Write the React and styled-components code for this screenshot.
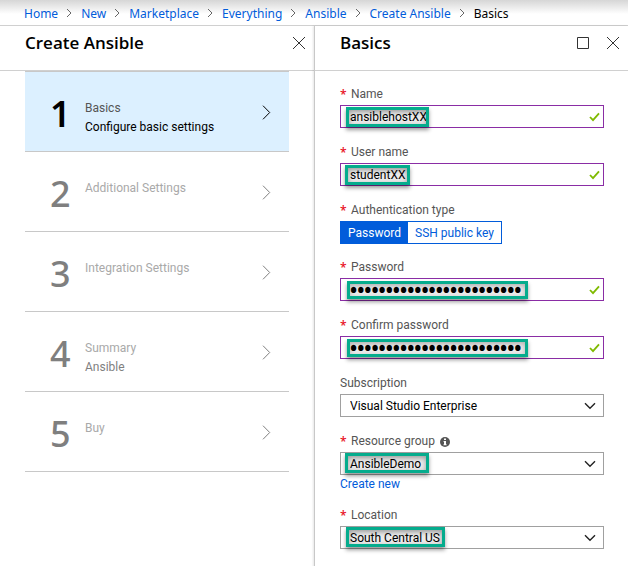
import React from "react";
import styled, { createGlobalStyle, css } from "styled-components";

const Global = createGlobalStyle`
  * { box-sizing: border-box; }
  body { margin: 0; background: #fff; color: #000; }
  body, button, input, select { font-family: Roboto, "Open Sans", sans-serif; font-size: 12px; }
  button { cursor: pointer; }
`;

const Page = styled.div`
  min-height: 100vh;
  display: flex;
  flex-direction: column;
`;

const Breadcrumb = styled.nav`
  height: 26px;
  padding: 1px 24px 0;
  display: flex;
  align-items: center;
  gap: 8px;
  font-family: "Noto Sans", sans-serif;
  font-size: 12px;
  white-space: nowrap;
  border-bottom: 1px solid #d0d0d0;
  background: linear-gradient(#d6d6d6, #fff 14px);
`;

const Crumb = styled.a`
  color: #015cda;
  text-decoration: none;
`;

const CurrentCrumb = styled.span`
  color: #000;
`;

const Blades = styled.main`
  flex: 1;
  display: grid;
  grid-template-columns: 1fr 1fr;
`;

const Blade = styled.section`
  min-width: 0;
  border-left: ${(p) => (p.$divided ? "1px solid #c8c8c8" : "none")};
  box-shadow: ${(p) => (p.$divided ? "-1px 0 2px rgba(0, 0, 0, 0.1)" : "none")};
`;

const BladeHeader = styled.header`
  height: 45px;
  padding: 0 7px 10px 25px;
  display: flex;
  align-items: center;
  gap: 14px;
  border-bottom: 1px solid #d0d0d0;
`;

const Title = styled.h1`
  flex: 1;
  margin: 0;
  font-family: "Open Sans", "Noto Sans", sans-serif;
  font-size: 17px;
  line-height: 24px;
  font-weight: 600;
`;

const IconButton = styled.button`
  display: flex;
  padding: 1px;
  border: 0;
  background: none;
  color: #333;
`;

const Steps = styled.ol`
  list-style: none;
  margin: 0 25px;
  padding: 0;
  border-top: 1px solid #c8c8c8;
`;

const StepItem = styled.li`
  border-bottom: 1px solid #c8c8c8;
`;

const StepButton = styled.button`
  width: 100%;
  height: 79px;
  padding: 2px 18px 0 25px;
  display: flex;
  align-items: center;
  border: 0;
  text-align: left;
  background: ${(p) => (p.$active ? "#dcf0ff" : "#fff")};
  color: ${(p) => (p.$active ? "#000" : "#7f7f7f")};
`;

const StepNumber = styled.span`
  width: 35px;
  padding-top: 2px;
  font-family: "Noto Sans", "Open Sans", sans-serif;
  font-size: 36px;
  line-height: 44px;
  font-weight: ${(p) => (p.$active ? 600 : 500)};
`;

const StepText = styled.span`
  flex: 1;
  height: 38px;
  display: flex;
  flex-direction: column;
  line-height: 19px;
  margin-top: 11px;
`;

const StepName = styled.span`
  color: ${(p) => (p.$active ? "#555" : "#a9a9a9")};
`;

const Form = styled.form`
  padding: 16px 24px 16px 25px;
`;

const Field = styled.div`
  margin-bottom: ${(p) => (p.$tight ? 16 : 17)}px;
`;

const labelStyle = css`
  display: flex;
  align-items: center;
  height: 18px;
  padding-bottom: 4px;
  color: #555;
`;

const Label = styled.label`
  ${labelStyle}
`;

const GroupLabel = styled.span`
  ${labelStyle}
`;

const Required = styled.span`
  width: 11px;
  color: #e81123;
  font-family: "Open Sans", sans-serif;
  font-size: 12px;
  font-weight: 600;
`;

const Control = styled.div`
  position: relative;
`;

const TextInput = styled.input`
  display: block;
  width: 100%;
  height: 23px;
  padding: 0 28px 0 9px;
  border: 1px solid #8a2da5;
  border-radius: 0;
  background: #fff;
  color: #000;
  outline: none;
`;

const PasswordInput = styled(TextInput)`
  font-family: "Noto Sans", sans-serif;
  font-size: 19px;
  font-weight: 700;
`;

const Select = styled.select`
  appearance: none;
  display: block;
  width: 100%;
  height: 23px;
  padding: 0 28px 0 9px;
  border: 1px solid #a0a0a0;
  border-radius: 0;
  background: #fff;
  color: #000;
  outline: none;
`;

const Adornment = styled.span`
  position: absolute;
  right: ${(p) => p.$right}px;
  top: 0;
  height: 100%;
  display: flex;
  align-items: center;
  pointer-events: none;
`;

const Highlight = styled.span`
  position: absolute;
  top: ${(p) => p.$top}px;
  left: ${(p) => p.$left}px;
  width: ${(p) => p.$width}px;
  height: ${(p) => (p.$filled ? 18 : 20)}px;
  border: 3px solid #05ac8d;
  background: rgba(0, 0, 0, 0.08);
  box-shadow: 0 3px 4px rgba(0, 0, 0, 0.4), inset 0 2px 5px rgba(0, 0, 0, ${(p) => (p.$filled ? 0.25 : 0.35)});
  pointer-events: none;
`;

const Segmented = styled.div`
  display: inline-flex;
  height: 23px;
  vertical-align: top;
  border: 1px solid #015cda;
`;

const Segment = styled.button`
  padding: 0 7px;
  border: 0;
  white-space: nowrap;
  background: ${(p) => (p.$selected ? "#015cda" : "#fff")};
  color: ${(p) => (p.$selected ? "#fff" : "#015cda")};
`;

const CreateLink = styled.a`
  display: block;
  height: 16px;
  line-height: 18px;
  color: #015cda;
  text-decoration: none;
`;

const InfoIcon = styled.svg`
  margin: 2px 0 0 5px;
`;

const CloseIcon = () => (
  <svg width="14" height="14" viewBox="0 0 14 14" fill="none" stroke="currentColor" aria-hidden="true">
    <path d="M1 1l12 12M13 1L1 13" />
  </svg>
);

const MaximizeIcon = () => (
  <svg width="14" height="14" viewBox="0 0 14 14" fill="none" stroke="currentColor" aria-hidden="true">
    <path d="M1.5 1.5h11v11h-11z" />
  </svg>
);

const StepChevron = () => (
  <svg width="9" height="15" viewBox="0 0 9 15" fill="none" stroke="currentColor" aria-hidden="true">
    <path d="M1 .7l6.7 6.8L1 14.3" />
  </svg>
);

const CrumbChevron = () => (
  <svg width="7" height="10" viewBox="0 0 7 10" fill="none" stroke="#666" aria-hidden="true">
    <path d="M1 1l4 4-4 4" />
  </svg>
);

const DownChevron = () => (
  <svg width="12" height="8" viewBox="0 0 12 8" fill="none" stroke="#222" strokeWidth="1.4" aria-hidden="true">
    <path d="M1 1.2l5 5 5-5" />
  </svg>
);

const Check = () => (
  <svg width="11" height="10" viewBox="0 0 11 10" fill="none" stroke="#7fba00" strokeWidth="1.8" aria-hidden="true">
    <path d="M1 5l3 3.2L10 1.3" />
  </svg>
);

const crumbs = ["Home", "New", "Marketplace", "Everything", "Ansible", "Create Ansible"];

const steps = [
  { name: "Basics", detail: "Configure basic settings" },
  { name: "Additional Settings" },
  { name: "Integration Settings" },
  { name: "Summary", detail: "Ansible" },
  { name: "Buy" },
];

function TextField({ id, label, secret, value, mark }) {
  return (
    <Field>
      <Label htmlFor={id}>
        <Required>*</Required>
        {label}
      </Label>
      <Control>
        {secret ? (
          <PasswordInput id={id} type="password" defaultValue={value} />
        ) : (
          <TextInput id={id} type="text" defaultValue={value} />
        )}
        <Highlight $top={mark.top} $left={mark.left} $width={mark.width} $filled={secret} />
        <Adornment $right={4}>
          <Check />
        </Adornment>
      </Control>
    </Field>
  );
}

function SelectField({ id, label, value, required, info, mark, children }) {
  return (
    <Field>
      <Label htmlFor={id}>
        {required && <Required>*</Required>}
        {label}
        {info && (
          <InfoIcon width="10" height="10" viewBox="0 0 10 10" aria-hidden="true">
            <circle cx="5" cy="5" r="5" fill="#555" />
            <path d="M4 1.5h2v1.4H4zM3.6 4H6v3.2h.6v1H3.5v-1H4V5h-.4z" fill="#fff" />
          </InfoIcon>
        )}
      </Label>
      <Control>
        <Select id={id} defaultValue={value}>
          <option>{value}</option>
        </Select>
        {mark && <Highlight $top={mark.top} $left={mark.left} $width={mark.width} />}
        <Adornment $right={8}>
          <DownChevron />
        </Adornment>
      </Control>
      {children}
    </Field>
  );
}

export default function App() {
  return (
    <Page>
      <Global />
      <Breadcrumb aria-label="Breadcrumb">
        {crumbs.map((name) => (
          <React.Fragment key={name}>
            <Crumb href="#">{name}</Crumb>
            <CrumbChevron />
          </React.Fragment>
        ))}
        <CurrentCrumb aria-current="page">Basics</CurrentCrumb>
      </Breadcrumb>
      <Blades>
        <Blade>
          <BladeHeader>
            <Title>Create Ansible</Title>
            <IconButton aria-label="Close Create Ansible">
              <CloseIcon />
            </IconButton>
          </BladeHeader>
          <Steps>
            {steps.map((step, i) => (
              <StepItem key={step.name}>
                <StepButton $active={i === 0}>
                  <StepNumber $active={i === 0}>{i + 1}</StepNumber>
                  <StepText>
                    <StepName $active={i === 0}>{step.name}</StepName>
                    {step.detail && <span>{step.detail}</span>}
                  </StepText>
                  <StepChevron />
                </StepButton>
              </StepItem>
            ))}
          </Steps>
        </Blade>
        <Blade $divided>
          <BladeHeader>
            <Title as="h2">Basics</Title>
            <IconButton aria-label="Maximize Basics">
              <MaximizeIcon />
            </IconButton>
            <IconButton aria-label="Close Basics">
              <CloseIcon />
            </IconButton>
          </BladeHeader>
          <Form onSubmit={(e) => e.preventDefault()}>
            <TextField id="name" label="Name" value="ansiblehostXX" mark={{ top: 2, left: 6, width: 83 }} />
            <TextField id="user" label="User name" value="studentXX" mark={{ top: 2, left: 5, width: 65 }} />
            <Field $tight role="group" aria-labelledby="auth">
              <GroupLabel id="auth">
                <Required>*</Required>
                Authentication type
              </GroupLabel>
              <Segmented>
                <Segment type="button" aria-pressed="true" $selected>Password</Segment>
                <Segment type="button" aria-pressed="false">SSH public key</Segment>
              </Segmented>
            </Field>
            <TextField id="password" secret label="Password" value="abcdefghijklmnopqrstuvwx" mark={{ top: 3, left: 7, width: 181 }} />
            <TextField id="confirm" secret label="Confirm password" value="abcdefghijklmnopqrstuvwx" mark={{ top: 3, left: 7, width: 181 }} />
            <SelectField id="subscription" label="Subscription" value="Visual Studio Enterprise" />
            <SelectField id="group" label="Resource group" value="AnsibleDemo" required info mark={{ top: 1, left: 5, width: 84 }}>
              <CreateLink href="#">Create new</CreateLink>
            </SelectField>
            <SelectField id="location" label="Location" value="South Central US" required mark={{ top: 1, left: 6, width: 99 }} />
          </Form>
        </Blade>
      </Blades>
    </Page>
  );
}
